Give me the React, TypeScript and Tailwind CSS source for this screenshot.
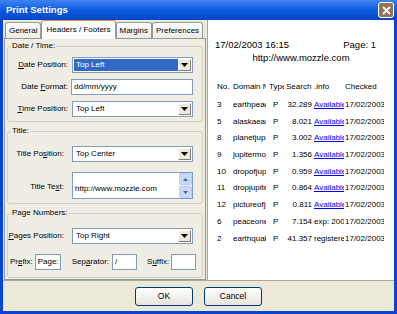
import React from "react";

const ui = { fontFamily: '"Liberation Sans", Arial, sans-serif' };

const rows = [
  ["3", "earthpeace", "32.289", "Available"],
  ["5", "alaskaearth", "8.021", "Available"],
  ["8", "planetjupiter", "3.002", "Available"],
  ["9", "jupitermoon", "1.356", "Available"],
  ["10", "dropofjupiter", "0.959", "Available"],
  ["11", "dropjupiter", "0.864", "Available"],
  ["12", "pictureofjupiter", "0.811", "Available"],
  ["6", "peaceonearth", "7.154", "exp: 2003"],
  ["2", "earthquake", "41.357", "registered"],
];

function U({ children }: { children: React.ReactNode }) {
  return <span className="underline underline-offset-1">{children}</span>;
}

function Combo({ value, selected }: { value: string; selected?: boolean }) {
  return (
    <div className="flex h-[16px] w-[121px] items-stretch border border-[#7f9db9] bg-white p-[1px]">
      <div
        className={
          selected
            ? "flex flex-1 items-center bg-[#316ac5] pl-[2px] text-white"
            : "flex flex-1 items-center pl-[2px] text-black"
        }
      >
        {value}
      </div>
      <div className="flex w-[13px] items-center justify-center border border-t-white border-l-white border-r-[#808080] border-b-[#808080] bg-[#ece9d8]">
        <svg width="7" height="4" viewBox="0 0 7 4">
          <path d="M0 0h7L3.5 4z" fill="#000" />
        </svg>
      </div>
    </div>
  );
}

function Field({ value, w }: { value: string; w: string }) {
  return (
    <div className={`flex h-[16px] items-center border border-[#7f9db9] bg-white pl-[2px] ${w}`}>
      {value}
    </div>
  );
}

function Group({ title, h, children }: { title: string; h: string; children: React.ReactNode }) {
  return (
    <div className={`relative rounded-[3px] border border-[#d0d0bf] ${h}`}>
      <span className="absolute -top-[6px] left-[3px] bg-[#efede4] px-[1px] leading-[10px]">{title}</span>
      {children}
    </div>
  );
}

function Tab({ label, active }: { label: string; active?: boolean }) {
  if (active) {
    return (
      <div className="z-10 -mb-[1px] flex h-[19px] items-center rounded-t-[3px] border border-b-0 border-[#919b9c] border-t-[#e68b2c] bg-[#fcfcfe] px-[4px]">
        {label}
      </div>
    );
  }
  return (
    <div className="mt-[2px] flex h-[16px] items-center rounded-t-[3px] border border-b-0 border-[#919b9c] bg-gradient-to-b from-white to-[#ecebe5] px-[3px]">
      {label}
    </div>
  );
}

function Button({ label }: { label: string }) {
  return (
    <div className="flex h-[19px] w-[58px] items-center justify-center rounded-[3px] border border-[#003c74] bg-gradient-to-b from-white to-[#e6e4dc] text-[8.5px]">
      {label}
    </div>
  );
}

export default function App() {
  return (
    <div className="flex h-[314px] w-[397px] flex-col whitespace-nowrap bg-[#0a45cf] text-[8px] text-black" style={ui}>
      {/* title bar */}
      <div className="flex h-[20px] items-center justify-between bg-gradient-to-b from-[#3f84f2] via-[#0b5be0] to-[#0846c4] pl-[6px] pr-[3px]">
        <span className="text-[9.5px] font-bold text-white">Print Settings</span>
        <div className="flex h-[16px] w-[16px] items-center justify-center rounded-[3px] border border-white bg-[#97705e]">
          <svg width="9" height="9" viewBox="0 0 9 9">
            <path d="M1 1l7 7M8 1L1 8" stroke="#fff" strokeWidth="1.8" />
          </svg>
        </div>
      </div>

      {/* dialog body */}
      <div className="mx-[3px] mb-[3px] flex flex-1 flex-col bg-[#ece9d8]">
        <div className="flex h-[261px] border-b border-[#aca899]">
          {/* tab control */}
          <div className="ml-[1px] flex w-[202px] flex-col">
            <div className="flex h-[18px] items-start pl-[1px]">
              <Tab label="General" />
              <Tab label="Headers / Footers" active />
              <Tab label="Margins" />
              <Tab label="Preferences" />
            </div>
            <div className="flex flex-1 flex-col gap-[9px] border border-[#919b9c] bg-[#efede4] px-[2px] pt-[7px]">
              <Group title="Date / Time:" h="h-[76px]">
                <div className="flex flex-col gap-[6px] pt-[10px]">
                  <div className="flex items-center">
                    <span className="w-[60px] text-right"><U>D</U>ate Position:</span>
                    <div className="ml-[4px]"><Combo value="Top Left" selected /></div>
                  </div>
                  <div className="flex items-center">
                    <span className="w-[60px] text-right">Date <U>F</U>ormat:</span>
                    <div className="ml-[3px]"><Field value="dd/mm/yyyy" w="w-[122px]" /></div>
                  </div>
                  <div className="flex items-center">
                    <span className="w-[60px] text-right"><U>T</U>ime Position:</span>
                    <div className="ml-[4px]"><Combo value="Top Left" /></div>
                  </div>
                </div>
              </Group>
              <Group title="Title:" h="h-[73px]">
                <div className="flex flex-col gap-[10px] pt-[14px]">
                  <div className="flex items-center">
                    <span className="w-[56px] text-right">Title Po<U>s</U>ition:</span>
                    <div className="ml-[8px]"><Combo value="Top Center" /></div>
                  </div>
                  <div className="flex items-start">
                    <span className="mt-[9px] w-[56px] text-right">Title Te<U>x</U>t:</span>
                    <div className="ml-[8px] flex h-[27px] w-[121px] border border-[#7f9db9] bg-white">
                      <div className="flex flex-1 items-end pb-[3px] pl-[2px]">http://www.mozzle.com</div>
                      <div className="flex w-[13px] flex-col justify-between bg-[#f3f1ec]">
                        <div className="flex h-[12px] items-center justify-center rounded-[2px] border border-[#b8cdf7] bg-[#c8d8fb]">
                          <svg width="5" height="3" viewBox="0 0 5 3"><path d="M0 3L2.5 0L5 3z" fill="#4d6185" /></svg>
                        </div>
                        <div className="flex h-[12px] items-center justify-center rounded-[2px] border border-[#b8cdf7] bg-[#c8d8fb]">
                          <svg width="5" height="3" viewBox="0 0 5 3"><path d="M0 0L2.5 3L5 0z" fill="#4d6185" /></svg>
                        </div>
                      </div>
                    </div>
                  </div>
                </div>
              </Group>
              <Group title="Page Numbers:" h="h-[65px]">
                <div className="flex flex-col gap-[10px] pt-[14px]">
                  <div className="flex items-center">
                    <span className="w-[56px] text-right"><U>P</U>ages Position:</span>
                    <div className="ml-[8px]"><Combo value="Top Right" /></div>
                  </div>
                  <div className="flex items-center pl-[2px]">
                    <span>Pr<U>e</U>fix:</span>
                    <div className="ml-[2px]"><Field value="Page:" w="w-[26px]" /></div>
                    <span className="ml-[11px]">Sep<U>a</U>rator:</span>
                    <div className="ml-[3px]"><Field value="/" w="w-[25px]" /></div>
                    <span className="ml-[10px]">S<U>u</U>ffix:</span>
                    <div className="ml-[2px]"><Field value="" w="w-[25px]" /></div>
                  </div>
                </div>
              </Group>
            </div>
          </div>

          {/* print preview */}
          <div className="ml-[1px] flex flex-1 flex-col border-l border-[#aca899] bg-white text-[9.5px]">
            <div className="flex justify-between pl-[7px] pr-[18px] pt-[19px] leading-[11px]">
              <span>17/02/2003 16:15</span>
              <span>Page: 1</span>
            </div>
            <div className="mt-[2px] text-center leading-[11px]">http://www.mozzle.com</div>
            <div className="mt-[19px] flex flex-col pl-[9px] text-[8px] leading-[10px]">
              <div className="flex h-[18px] items-start">
                <span className="w-[16px]">No.</span>
                <span className="w-[36px]"><span className="block w-[33px] overflow-hidden">Domain Name</span></span>
                <span className="w-[17px]"><span className="block w-[15px] overflow-hidden">Type</span></span>
                <span className="w-[28px]">Search</span>
                <span className="w-[31px]">.info</span>
                <span className="w-[39px] overflow-hidden">Checked</span>
              </div>
              {rows.map((r) => (
                <div key={r[0]} className="flex h-[16.7px] items-start">
                  <span className="w-[16px]">{r[0]}</span>
                  <span className="w-[36px]"><span className="block w-[33px] overflow-hidden">{r[1]}</span></span>
                  <span className="w-[17px] pl-[4px]">P</span>
                  <span className="w-[28px] pr-[2px] text-right">{r[2]}</span>
                  <span className="w-[31px]">
                    <span
                      className={
                        r[3] === "Available"
                          ? "block w-[30px] overflow-hidden text-[#0000ff] underline"
                          : "block w-[30px] overflow-hidden"
                      }
                    >
                      {r[3]}
                    </span>
                  </span>
                  <span className="w-[39px] overflow-hidden">17/02/2003</span>
                </div>
              ))}
            </div>
          </div>
        </div>

        {/* buttons */}
        <div className="flex flex-1 items-start justify-center gap-[11px] pt-[6px]">
          <Button label="OK" />
          <Button label="Cancel" />
        </div>
      </div>
    </div>
  );
}
